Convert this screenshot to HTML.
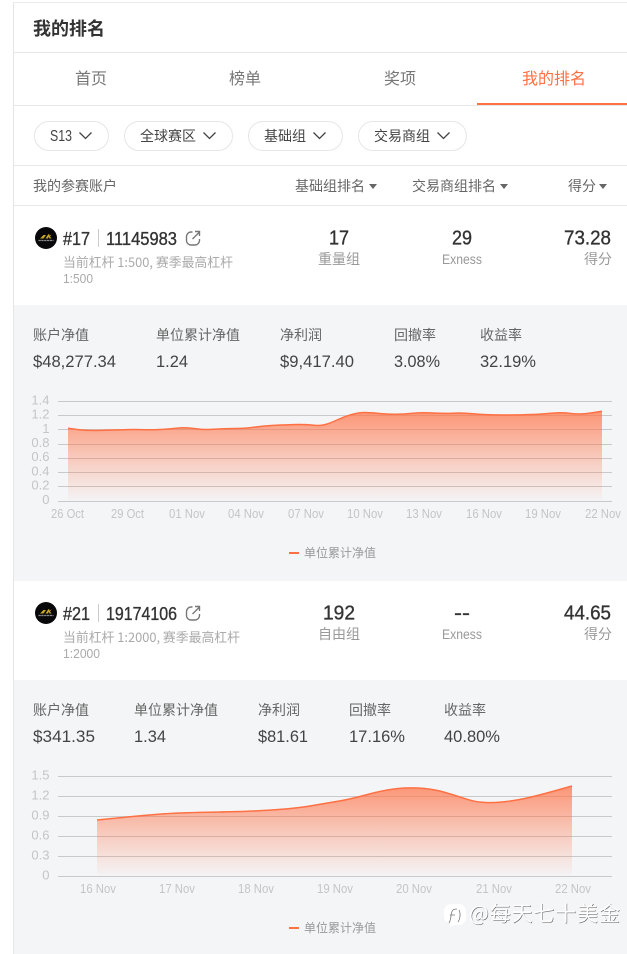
<!DOCTYPE html>
<html lang="zh">
<head>
<meta charset="utf-8">
<title>我的排名</title>
<style>
html,body{margin:0;padding:0;background:#fff;width:627px;height:954px;overflow:hidden}
svg{display:block}
text{font-family:"Liberation Sans","Noto Sans CJK SC",sans-serif}
.cjk{font-family:"Noto Sans CJK SC","Liberation Sans",sans-serif}
.t14{font-size:14px;fill:#666}
.s14{font-size:14px;fill:#999}
.s12{font-size:13px;fill:#aaa}
.num{font-size:18.500px;fill:#333;stroke:#333;stroke-width:.35}
.big{font-size:20.500px;fill:#333;stroke:#333;stroke-width:.35}
.val{font-size:17px;fill:#444}
.ax{font-size:13px;fill:#c4c5c7}
.lg{font-size:12px;fill:#999}
.g{stroke:#c9c9cb;stroke-width:1}
</style>
</head>
<body>
<svg xmlns="http://www.w3.org/2000/svg" width="627" height="954" viewBox="0 0 627 954">
<defs>
<linearGradient id="a1" x1="0" y1="0" x2="0" y2="1"><stop offset="0" stop-color="#ff7043" stop-opacity=".72"/><stop offset=".5" stop-color="#ff7043" stop-opacity=".34"/><stop offset="1" stop-color="#ff7043" stop-opacity=".01"/></linearGradient>
</defs>
<rect width="627" height="954" fill="#fff"/>
<rect x="14" y="305" width="613" height="276" fill="#f4f5f7"/>
<rect x="14" y="680" width="613" height="274" fill="#f4f5f7"/>
<rect x="13" y="2" width="1" height="952" fill="#e6e6e6"/>
<rect x="13" y="2" width="614" height="1" fill="#ececec"/>
<rect x="14" y="52" width="613" height="1" fill="#e8e8e8"/>
<rect x="14" y="105" width="613" height="1" fill="#e8e8e8"/>
<rect x="14" y="165" width="613" height="1" fill="#e8e8e8"/>
<rect x="14" y="205" width="613" height="1" fill="#e8e8e8"/>

<text class="cjk" x="33" y="35" font-size="18" font-weight="700" fill="#333" textLength="72" lengthAdjust="spacingAndGlyphs">我的排名</text>

<text class="cjk" x="75" y="84" fill="#777" font-size="16">首页</text>
<text class="cjk" x="229" y="84" fill="#777" font-size="16">榜单</text>
<text class="cjk" x="384" y="84" fill="#777" font-size="16">奖项</text>
<text class="cjk" x="522" y="84" fill="#ff7043" font-size="16">我的排名</text>
<rect x="477" y="103" width="150" height="2" fill="#ff7043"/>

<g fill="#fff" stroke="#e6e6e6">
<rect x="34.500" y="121.500" width="74" height="29" rx="14.500"/>
<rect x="124.500" y="121.500" width="108" height="29" rx="14.500"/>
<rect x="248.500" y="121.500" width="94" height="29" rx="14.500"/>
<rect x="358.500" y="121.500" width="108" height="29" rx="14.500"/>
</g>
<text x="50" y="141" font-size="15.500" fill="#444" textLength="22" lengthAdjust="spacingAndGlyphs">S13</text>
<text class="cjk" x="140" y="141" font-size="14" fill="#444">全球赛区</text>
<text class="cjk" x="264" y="141" font-size="14" fill="#444">基础组</text>
<text class="cjk" x="374" y="141" font-size="14" fill="#444">交易商组</text>
<g fill="none" stroke="#444" stroke-width="1.300">
<path d="M79.500 132.500l6 6 6-6"/>
<path d="M203.500 132.500l6 6 6-6"/>
<path d="M313.500 132.500l6 6 6-6"/>
<path d="M437.500 132.500l6 6 6-6"/>
</g>

<text class="cjk t14" x="33" y="191">我的参赛账户</text>
<text class="cjk t14" x="295" y="191">基础组排名</text>
<text class="cjk t14" x="412" y="191">交易商组排名</text>
<text class="cjk t14" x="568" y="191">得分</text>
<g fill="#666">
<path d="M369 184h8l-4 5z"/>
<path d="M500 184h8l-4 5z"/>
<path d="M599 184h8l-4 5z"/>
</g>

<!-- Account 1 -->
<circle cx="46" cy="238" r="11" fill="#08080a"/>
<path d="M40 238.500l3.500-3.500h2.500l-2.500 3.500zM45.500 238.500l3-4.500 1 .7-1.500 3.800zM48.500 236l3-1.500-1.500 2 1.500 2h-2z" fill="#c9a822"/>
<path d="M38.500 240.500h15" stroke="#8a8a8a" stroke-width="1.200" stroke-dasharray="2.300 .5"/>
<text class="num" x="63" y="245" textLength="27" lengthAdjust="spacingAndGlyphs">#17</text>
<rect x="98" y="229" width="1" height="18" fill="#ccc"/>
<text class="num" x="106" y="245" textLength="71" lengthAdjust="spacingAndGlyphs">11145983</text>
<g fill="none" stroke="#777" stroke-width="1.400">
<path d="M192.500 232H191a4.500 4.500 0 0 0-4.500 4.500v4a4.500 4.500 0 0 0 4.500 4.500h4a4.500 4.500 0 0 0 4.500-4.500v-1.500"/>
<path d="M192.500 239L199.500 232M195 231.500h4.500v4.500"/>
</g>
<text class="cjk s12" x="63" y="267" textLength="170" lengthAdjust="spacingAndGlyphs">当前杠杆 1:500, 赛季最高杠杆</text>
<text class="s12" x="63" y="283" textLength="30" lengthAdjust="spacingAndGlyphs">1:500</text>

<text class="big" x="329" y="244.500" textLength="20" lengthAdjust="spacingAndGlyphs">17</text>
<text class="cjk s14" x="318" y="264">重量组</text>
<text class="big" x="452" y="244.500" textLength="20" lengthAdjust="spacingAndGlyphs">29</text>
<text class="s14" x="442" y="264" textLength="40" lengthAdjust="spacingAndGlyphs">Exness</text>
<text class="big" x="564" y="244.500" textLength="47" lengthAdjust="spacingAndGlyphs">73.28</text>
<text class="cjk s14" x="584" y="264">得分</text>

<text class="cjk t14" x="33" y="340">账户净值</text>
<text class="cjk t14" x="156" y="340">单位累计净值</text>
<text class="cjk t14" x="280" y="340">净利润</text>
<text class="cjk t14" x="394" y="340">回撤率</text>
<text class="cjk t14" x="480" y="340">收益率</text>
<text class="val" x="33" y="367" textLength="83" lengthAdjust="spacingAndGlyphs">$48,277.34</text>
<text class="val" x="156" y="367" textLength="32" lengthAdjust="spacingAndGlyphs">1.24</text>
<text class="val" x="280" y="367" textLength="74" lengthAdjust="spacingAndGlyphs">$9,417.40</text>
<text class="val" x="394" y="367" textLength="46" lengthAdjust="spacingAndGlyphs">3.08%</text>
<text class="val" x="480" y="367" textLength="56" lengthAdjust="spacingAndGlyphs">32.19%</text>

<!-- Chart 1 -->
<path class="g" d="M58 401.500H612M58 415.500H612M58 429.500H612M58 444.500H612M58 458.500H612M58 472.500H612M58 486.500H612M58 501.500H612"/>
<path fill="url(#a1)" d="M68 428.300L78 429.600Q88 431 109 430.100Q130 429.300 140 429.600Q150 430 160 429.500Q170 429 177.500 428.100Q185 427.300 195 428.600Q205 430 214 429.300Q223 428.700 235 428.500Q247 428.300 255 427.100Q263 426 271.500 425.500Q280 425 292.500 424.600Q305 424.300 312.500 425.100Q320 426 325 424.600Q330 423.300 337 420Q344 416.700 350.500 414.800Q357 413 362 412.600Q367 412.300 377 413.300Q387 414.300 395.500 414.300Q404 414.300 413 413.300Q422 412.300 433 413Q444 413.700 453 413.200Q462 412.700 473 413.800Q484 415 502 415Q520 415 532 414.500Q544 414 553 413.100Q562 412.300 571 413.500Q580 414.700 591 413L602 411.300V501H68Z"/>
<path fill="none" stroke="#ff7043" stroke-width="1.500" d="M68 428.300L78 429.600Q88 431 109 430.100Q130 429.300 140 429.600Q150 430 160 429.500Q170 429 177.500 428.100Q185 427.300 195 428.600Q205 430 214 429.300Q223 428.700 235 428.500Q247 428.300 255 427.100Q263 426 271.500 425.500Q280 425 292.500 424.600Q305 424.300 312.500 425.100Q320 426 325 424.600Q330 423.300 337 420Q344 416.700 350.500 414.800Q357 413 362 412.600Q367 412.300 377 413.300Q387 414.300 395.500 414.300Q404 414.300 413 413.300Q422 412.300 433 413Q444 413.700 453 413.200Q462 412.700 473 413.800Q484 415 502 415Q520 415 532 414.500Q544 414 553 413.100Q562 412.300 571 413.500Q580 414.700 591 413L602 411.300"/>
<g text-anchor="end">
<text class="ax" x="49.500" y="404.500">1.4</text><text class="ax" x="49.500" y="418.500">1.2</text><text class="ax" x="49.500" y="433">1</text><text class="ax" x="49.500" y="447">0.8</text><text class="ax" x="49.500" y="461">0.6</text><text class="ax" x="49.500" y="475.500">0.4</text><text class="ax" x="49.500" y="489.500">0.2</text><text class="ax" x="49.500" y="504">0</text>
</g>
<text class="ax" x="51" y="518" textLength="33" lengthAdjust="spacingAndGlyphs">26 Oct</text>
<text class="ax" x="111" y="518" textLength="33" lengthAdjust="spacingAndGlyphs">29 Oct</text>
<text class="ax" x="169" y="518" textLength="36" lengthAdjust="spacingAndGlyphs">01 Nov</text>
<text class="ax" x="228" y="518" textLength="36" lengthAdjust="spacingAndGlyphs">04 Nov</text>
<text class="ax" x="288" y="518" textLength="36" lengthAdjust="spacingAndGlyphs">07 Nov</text>
<text class="ax" x="347" y="518" textLength="36" lengthAdjust="spacingAndGlyphs">10 Nov</text>
<text class="ax" x="406" y="518" textLength="36" lengthAdjust="spacingAndGlyphs">13 Nov</text>
<text class="ax" x="466" y="518" textLength="36" lengthAdjust="spacingAndGlyphs">16 Nov</text>
<text class="ax" x="525" y="518" textLength="36" lengthAdjust="spacingAndGlyphs">19 Nov</text>
<text class="ax" x="585" y="518" textLength="36" lengthAdjust="spacingAndGlyphs">22 Nov</text>
<rect x="289" y="552" width="10" height="2" fill="#ff7043"/>
<text class="cjk lg" x="304" y="557">单位累计净值</text>

<!-- Account 2 -->
<circle cx="46" cy="613" r="11" fill="#08080a"/>
<path d="M40 613.500l3.500-3.500h2.500l-2.500 3.500zM45.500 613.500l3-4.500 1 .7-1.500 3.800zM48.500 611l3-1.500-1.500 2 1.500 2h-2z" fill="#c9a822"/>
<path d="M38.500 615.500h15" stroke="#8a8a8a" stroke-width="1.200" stroke-dasharray="2.300 .5"/>
<text class="num" x="63" y="620" textLength="27" lengthAdjust="spacingAndGlyphs">#21</text>
<rect x="98" y="604" width="1" height="18" fill="#ccc"/>
<text class="num" x="106" y="620" textLength="71" lengthAdjust="spacingAndGlyphs">19174106</text>
<g fill="none" stroke="#777" stroke-width="1.400">
<path d="M192.500 607H191a4.500 4.500 0 0 0-4.500 4.500v4a4.500 4.500 0 0 0 4.500 4.500h4a4.500 4.500 0 0 0 4.500-4.500v-1.500"/>
<path d="M192.500 614L199.500 607M195 606.500h4.500v4.500"/>
</g>
<text class="cjk s12" x="63" y="642" textLength="177" lengthAdjust="spacingAndGlyphs">当前杠杆 1:2000, 赛季最高杠杆</text>
<text class="s12" x="63" y="658" textLength="37" lengthAdjust="spacingAndGlyphs">1:2000</text>

<text class="big" x="323" y="619.500" textLength="32" lengthAdjust="spacingAndGlyphs">192</text>
<text class="cjk s14" x="318" y="639">自由组</text>
<text class="big" x="454" y="619.500" textLength="16" lengthAdjust="spacingAndGlyphs">--</text>
<text class="s14" x="442" y="639" textLength="40" lengthAdjust="spacingAndGlyphs">Exness</text>
<text class="big" x="564" y="619.500" textLength="47" lengthAdjust="spacingAndGlyphs">44.65</text>
<text class="cjk s14" x="584" y="639">得分</text>

<text class="cjk t14" x="33" y="715">账户净值</text>
<text class="cjk t14" x="134" y="715">单位累计净值</text>
<text class="cjk t14" x="258" y="715">净利润</text>
<text class="cjk t14" x="349" y="715">回撤率</text>
<text class="cjk t14" x="444" y="715">收益率</text>
<text class="val" x="33" y="742" textLength="62" lengthAdjust="spacingAndGlyphs">$341.35</text>
<text class="val" x="134" y="742" textLength="32" lengthAdjust="spacingAndGlyphs">1.34</text>
<text class="val" x="258" y="742" textLength="50" lengthAdjust="spacingAndGlyphs">$81.61</text>
<text class="val" x="349" y="742" textLength="56" lengthAdjust="spacingAndGlyphs">17.16%</text>
<text class="val" x="444" y="742" textLength="56" lengthAdjust="spacingAndGlyphs">40.80%</text>

<!-- Chart 2 -->
<path class="g" d="M58 776.500H612M58 796.500H612M58 816.500H612M58 836.500H612M58 856.500H612M58 876.500H612"/>
<path fill="url(#a1)" d="M97 820L118.500 817.900Q140 815.700 158.500 814.200Q177 812.700 208.500 812.200Q240 811.700 253.500 811Q267 810.300 282 809.200Q297 808 308.500 806.200Q320 804.300 335 801.800Q350 799.300 367 794.600Q384 790 397 788.600Q410 787.300 422 788.300Q434 789.300 444 792.100Q454 795 464 798.300Q474 801.700 482 802.300Q490 803 502 802Q514 801 527 798Q540 795 556 790.500L572 786V876H97Z"/>
<path fill="none" stroke="#ff7043" stroke-width="1.500" d="M97 820L118.500 817.900Q140 815.700 158.500 814.200Q177 812.700 208.500 812.200Q240 811.700 253.500 811Q267 810.300 282 809.200Q297 808 308.500 806.200Q320 804.300 335 801.800Q350 799.300 367 794.600Q384 790 397 788.600Q410 787.300 422 788.300Q434 789.300 444 792.100Q454 795 464 798.300Q474 801.700 482 802.300Q490 803 502 802Q514 801 527 798Q540 795 556 790.500L572 786"/>
<g text-anchor="end">
<text class="ax" x="49.500" y="779.500">1.5</text><text class="ax" x="49.500" y="799.500">1.2</text><text class="ax" x="49.500" y="819.500">0.9</text><text class="ax" x="49.500" y="839.500">0.6</text><text class="ax" x="49.500" y="859.500">0.3</text><text class="ax" x="49.500" y="879.500">0</text>
</g>
<text class="ax" x="80" y="893" textLength="36" lengthAdjust="spacingAndGlyphs">16 Nov</text>
<text class="ax" x="159" y="893" textLength="36" lengthAdjust="spacingAndGlyphs">17 Nov</text>
<text class="ax" x="238" y="893" textLength="36" lengthAdjust="spacingAndGlyphs">18 Nov</text>
<text class="ax" x="317" y="893" textLength="36" lengthAdjust="spacingAndGlyphs">19 Nov</text>
<text class="ax" x="396" y="893" textLength="36" lengthAdjust="spacingAndGlyphs">20 Nov</text>
<text class="ax" x="476" y="893" textLength="36" lengthAdjust="spacingAndGlyphs">21 Nov</text>
<text class="ax" x="555" y="893" textLength="36" lengthAdjust="spacingAndGlyphs">22 Nov</text>
<rect x="289" y="927" width="10" height="2" fill="#ff7043"/>
<text class="cjk lg" x="304" y="932">单位累计净值</text>

<!-- Watermark -->
<path d="M452 904h7a7 7 0 0 1 7 7v7a7 7 0 0 1-7 7h-4l-5 2-1-4a7 7 0 0 1-5-6v-6a7 7 0 0 1 8-7z" fill="#fff"/>
<path d="M449 923c3-5 1-10 4-13 1-1 3-1 4-1M450 915h5M459 910c2 4 1 9-1 12" fill="none" stroke="#777" stroke-width=".8"/>
<text class="cjk" x="469.500" y="921.500" font-size="21" fill="#555" textLength="151" lengthAdjust="spacing">@每天七十美金</text>
<text class="cjk" x="469" y="921" font-size="21" fill="#fff" textLength="151" lengthAdjust="spacing">@每天七十美金</text>
</svg>
</body>
</html>
